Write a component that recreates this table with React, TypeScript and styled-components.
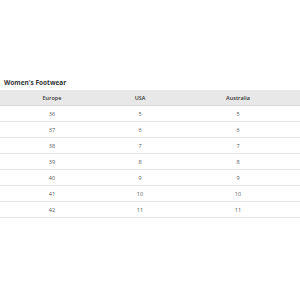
import styled, { createGlobalStyle } from 'styled-components'

const GlobalStyle = createGlobalStyle`
  html, body {
    margin: 0;
    padding: 0;
    background: #ffffff;
  }
  body {
    font-family: 'Open Sans', 'Noto Sans', sans-serif;
  }
`

const rows: [string, string, string][] = [
  ['36', '5', '5'],
  ['37', '6', '6'],
  ['38', '7', '7'],
  ['39', '8', '8'],
  ['40', '9', '9'],
  ['41', '10', '10'],
  ['42', '11', '11'],
]

const Page = styled.div`
  width: 300px;
  height: 300px;
  box-sizing: border-box;
  padding-top: 78px;
  display: flex;
  flex-direction: column;
`

const Title = styled.h3`
  color: #333333;
  font-size: 6.5px;
  font-weight: 700;
  line-height: 9px;
  margin: 0 0 3px 4px;
`

const Table = styled.table`
  border-collapse: collapse;
  width: 100%;
  font-size: 5.5px;
  color: #555555;
`

const HeadCell = styled.th<{ w: number }>`
  background: #e8e8e8;
  border-bottom: 1px solid #d8d8d8;
  color: #333333;
  font-weight: 600;
  height: 15px;
  padding: 0;
  text-align: center;
  width: ${({ w }) => w}px;
`

const Cell = styled.td`
  border-bottom: 1px solid #e6e6e6;
  height: 15px;
  padding: 0;
  text-align: center;
`

const App = () => (
  <>
    <GlobalStyle />
    <Page>
      <Title>Women's Footwear</Title>
      <Table>
        <thead>
          <tr>
            <HeadCell w={104}>Europe</HeadCell>
            <HeadCell w={72}>USA</HeadCell>
            <HeadCell w={124}>Australia</HeadCell>
          </tr>
        </thead>
        <tbody>
          {rows.map(([eu, us, au]) => (
            <tr key={eu}>
              <Cell>{eu}</Cell>
              <Cell>{us}</Cell>
              <Cell>{au}</Cell>
            </tr>
          ))}
        </tbody>
      </Table>
    </Page>
  </>
)

export default App
